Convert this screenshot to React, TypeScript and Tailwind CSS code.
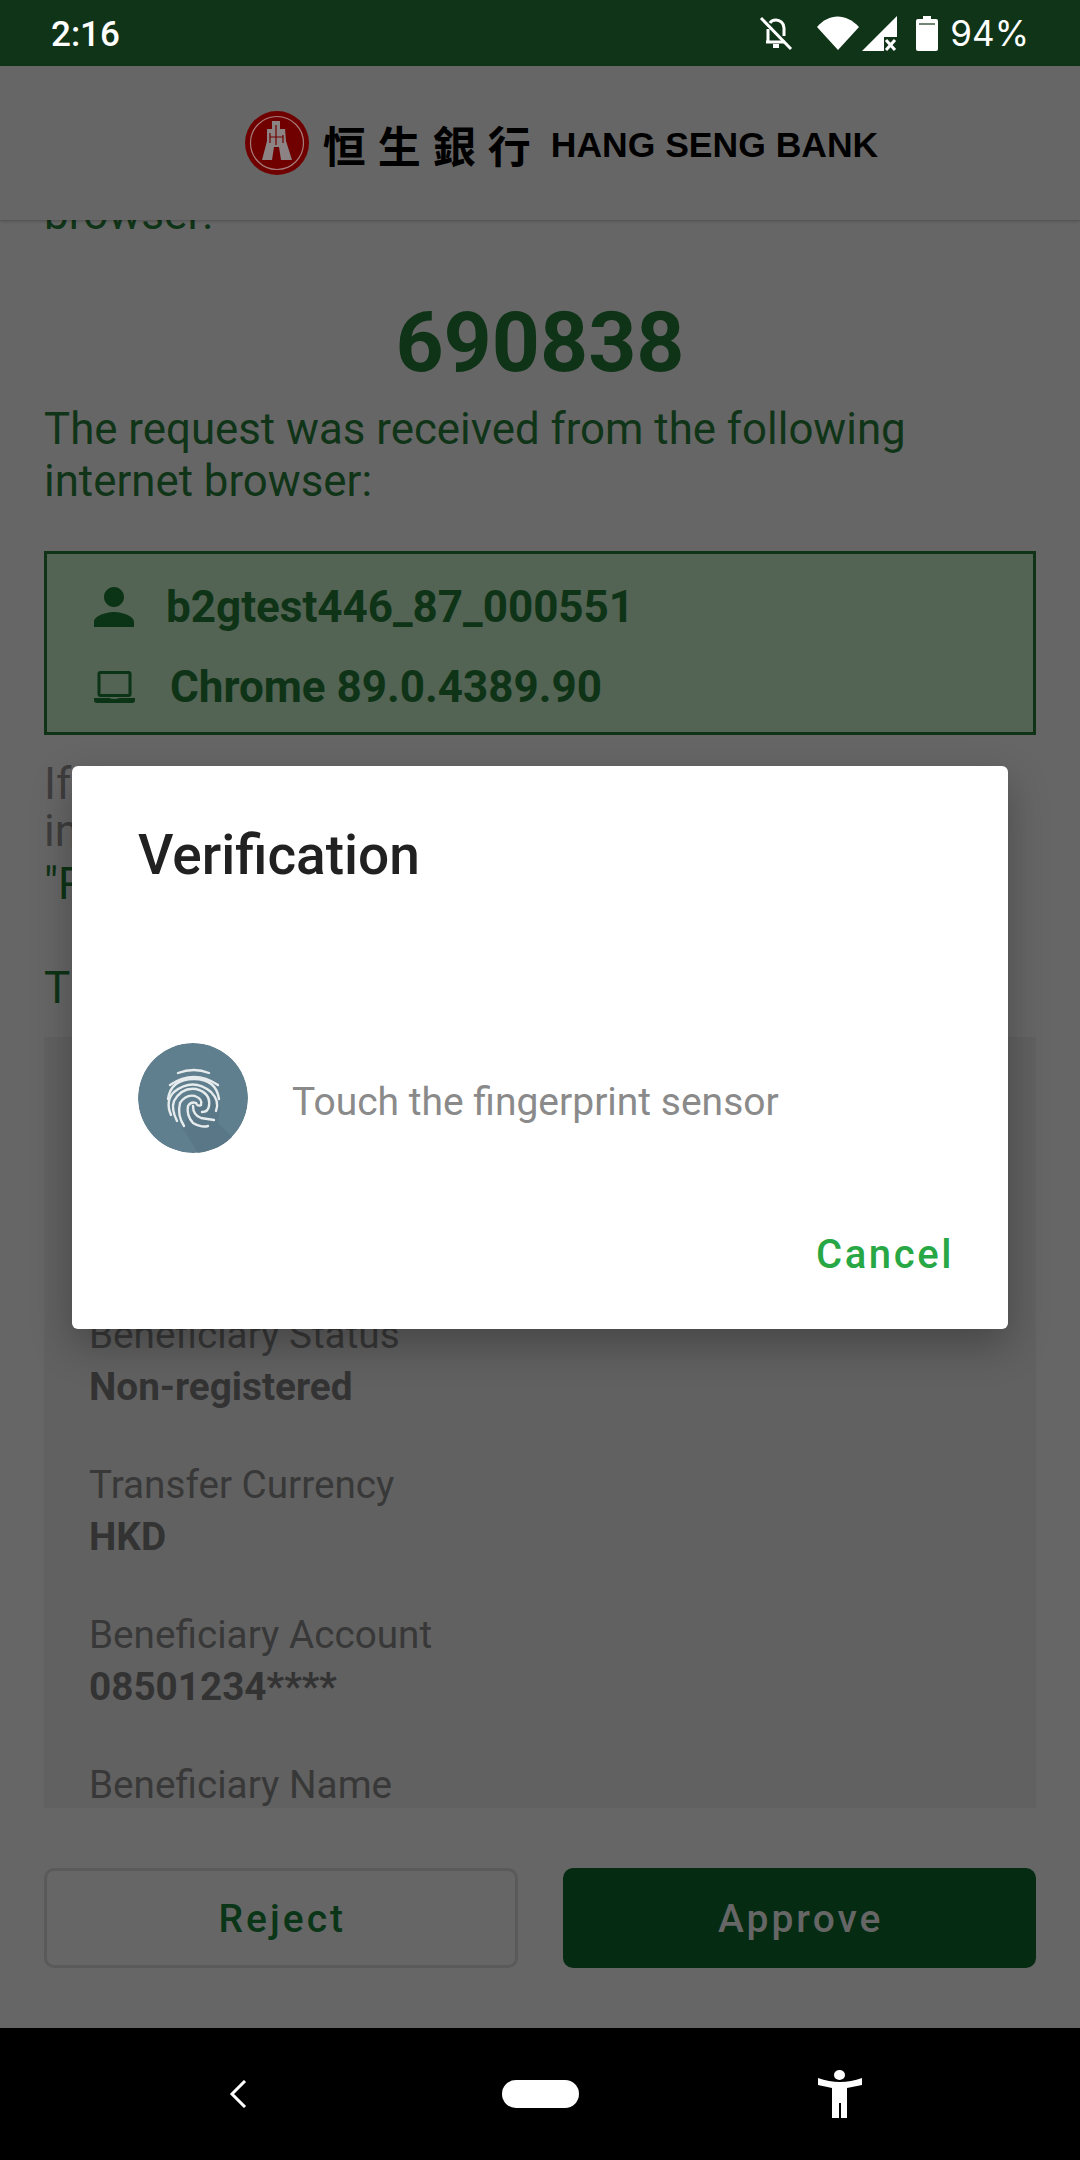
const roboto = "font-['Roboto',sans-serif]"

const details = [
  { label: 'Beneficiary Status', value: 'Non-registered' },
  { label: 'Transfer Currency', value: 'HKD' },
  { label: 'Beneficiary Account', value: '08501234****' },
  { label: 'Beneficiary Name', value: '' },
]

function StatusBar() {
  return (
    <div className="flex h-[66px] shrink-0 items-center bg-[#103417] pl-[51px] pr-[51px] text-white">
      <span className="pt-[2px] text-[35px] font-medium leading-none">2:16</span>
      <div className="ml-auto flex items-center">
        {/* bell off */}
        <svg width="36" height="36" viewBox="0 0 36 36" fill="none" stroke="#fff" strokeWidth="3" className="mr-[23px]">
          <path d="M3 3 L33 34" />
          <path d="M8 27 H27 M10 14 V26 M26 21 V13 C26 8 22 5 18 5 C15 5 13 6 12 8" />
          <path d="M15 31 H21" strokeWidth="4" />
        </svg>
        {/* wifi */}
        <svg width="42" height="34" viewBox="0 0 42 34" className="mr-[3px]">
          <path d="M0 11 C12 -3 29 -3 42 11 L21 34 Z" fill="#fff" />
        </svg>
        {/* signal, no sim */}
        <svg width="35" height="35" viewBox="0 0 35 35" className="mr-[19px]">
          <path d="M0 35 L35 0 V21 H22 V35 Z" fill="#fff" />
          <path d="M24 24 L33 34 M33 24 L24 34" stroke="#fff" strokeWidth="3" />
        </svg>
        {/* battery */}
        <svg width="22" height="35" viewBox="0 0 22 35" className="mr-[12px]">
          <path d="M7 0 H15 V3 H20 Q22 3 22 5 V33 Q22 35 20 35 H2 Q0 35 0 33 V5 Q0 3 2 3 H7 Z" fill="#fff" />
          <rect x="3" y="7" width="16" height="2" fill="#103417" opacity="0.6" />
        </svg>
        <span className="font-['Inter',sans-serif] text-[35px] leading-none">94%</span>
      </div>
    </div>
  )
}

function BankLogo() {
  return (
    <svg width="64" height="64" viewBox="0 0 64 64" className="shrink-0">
      <circle cx="32" cy="32" r="32" fill="#700000" />
      <circle cx="32" cy="32" r="26.5" fill="none" stroke="#a87c7c" strokeWidth="1.2" />
      <path d="M27 10 H35 V18 H40 L41 30 L47 49 H36 L34 36 H29 L27 49 H17 L22 30 L22 18 H27 Z" fill="#8c8484" />
      <path d="M31 14 V34 M25 26 H38 M25 22 V32 M38 24 V32" stroke="#700000" strokeWidth="1.2" fill="none" />
    </svg>
  )
}

function Header() {
  return (
    <div className="relative z-10 flex h-[154px] shrink-0 items-center justify-center bg-[#666666] pl-[43px] shadow-[0_1px_3px_rgba(0,0,0,0.25)]">
      <BankLogo />
      <span className="ml-[14px] pt-[3px] font-['Noto_Sans_CJK_TC',sans-serif] text-[43px] font-bold leading-none tracking-[12px] text-[#000000]">
        恒生銀行
      </span>
      <span className="ml-[8px] pt-[5px] font-['Liberation_Sans',sans-serif] text-[35.5px] font-bold leading-none text-[#000000]">
        HANG SENG BANK
      </span>
    </div>
  )
}

function UserIcon() {
  return (
    <svg width="60" height="60" viewBox="0 0 24 24" fill="#0b3316" className="-mx-[10px] shrink-0">
      <path d="M12 12c2.21 0 4-1.79 4-4s-1.79-4-4-4-4 1.79-4 4 1.79 4 4 4zm0 2c-2.67 0-8 1.34-8 4v2h16v-2c0-2.66-5.33-4-8-4z" />
    </svg>
  )
}

function LaptopIcon() {
  return (
    <svg width="41" height="32" viewBox="0 0 41 32" className="shrink-0">
      <rect x="5" y="1.5" width="31" height="23" rx="1.5" fill="none" stroke="#0b3316" strokeWidth="3" />
      <path d="M0 27 H15 Q20 29 26 27 H41 V29 Q41 32 38 32 H3 Q0 32 0 29 Z" fill="#0b3316" />
    </svg>
  )
}

function Fingerprint() {
  return (
    <svg width="110" height="110" viewBox="0 0 110 110" className="rounded-full">
      <circle cx="55" cy="55" r="55" fill="#5f7f8e" />
      <path d="M68 48 L82 62 L80 80 L110 110 L60 110 L44 84 Z" fill="#597786" />
      <g fill="none" stroke="#e6ebed" strokeWidth="2.4" strokeLinecap="round">
        <path d="M40 30 Q56 24 71 30" />
        <path d="M32 42 Q56 26 80 42" />
        <path d="M30 56 Q33 36 56 36 Q78 36 81 56" />
        <path d="M33 72 Q27 58 36 49 Q55 34 73 49 Q82 58 78 68" />
        <path d="M39 78 Q33 66 36 58 Q44 44 58 46 Q73 50 71 63 Q70 69 64 69" />
        <path d="M46 83 Q39 72 42 60 Q48 51 57 53 Q65 56 63 62 Q60 64 58 60 Q53 58 50 63 Q48 72 55 80 Q64 85 70 83" />
        <path d="M55 63 Q55 72 63 75 L76 77" />
      </g>
    </svg>
  )
}

function VerificationDialog() {
  return (
    <div className="absolute left-[72px] top-[766px] flex h-[563px] w-[936px] flex-col rounded-[6px] bg-white pl-[66px] pr-[54px] shadow-[0_16px_40px_rgba(0,0,0,0.28)]">
      <h2 className="mt-[59px] text-[55px] font-medium leading-[60px] text-[#212121]">Verification</h2>
      <div className="mt-[158px] flex items-center">
        <Fingerprint />
        <span className="ml-[44px] pt-[8px] text-[39px] leading-none text-[#8a8a8a]">Touch the fingerprint sensor</span>
      </div>
      <span className="ml-auto mt-[82px] text-[40px] font-medium leading-none tracking-[2.6px] text-[#28a745]">Cancel</span>
    </div>
  )
}

export default function App() {
  return (
    <div className={`relative flex h-[2160px] w-[1080px] flex-col overflow-hidden bg-[#666666] ${roboto}`}>
      <StatusBar />
      <Header />

      <main className="flex min-h-0 flex-1 flex-col overflow-hidden px-[44px]">
        <p className="-mt-[32px] text-[44px] leading-[52px] text-[#103417]">browser:</p>
        <p className="mt-[61px] text-center text-[84px] font-bold leading-[84px] text-[#0e3316]">690838</p>
        <p className="mt-[18px] text-[43.8px] leading-[52px] text-[#103417]">
          The request was received from the following
          <br />
          internet browser:
        </p>

        <div className="mt-[44px] flex h-[184px] flex-col border-[3px] border-[#0e3316] bg-[#536354] pl-[47px] pt-[25px] text-[44px] font-bold text-[#0e3316]">
          <div className="flex h-[56px] items-center">
            <UserIcon />
            <span className="ml-[32px] leading-none">b2gtest446_87_000551</span>
          </div>
          <div className="mt-[24px] flex h-[56px] items-center">
            <LaptopIcon />
            <span className="ml-[35px] leading-none">Chrome 89.0.4389.90</span>
          </div>
        </div>

        <div className="mt-[26px] text-[44px] leading-[47px] text-[#3d3d3d]">
          <p>If</p>
          <p>in</p>
          <p className="mt-[6px] text-[#0e3316]">"R</p>
        </div>
        <p className="mt-[54px] text-[44px] leading-[52px] text-[#0e3316]">T</p>

        <div className="mt-[23px] flex min-h-0 flex-1 flex-col bg-[#616161] px-[45px] pt-[272px]">
          {details.map(row => (
            <div key={row.label} className="mb-[46px] shrink-0 text-[38.7px] leading-[52px]">
              <p className="text-[#383838]">{row.label}</p>
              {row.value && <p className="font-bold text-[#333333]">{row.value}</p>}
            </div>
          ))}
        </div>
      </main>

      <div className="grid h-[220px] shrink-0 grid-cols-2 gap-[45px] px-[44px] pt-[60px] text-[39px] font-medium tracking-[3px]">
        <button className="h-[100px] rounded-[10px] border-[3px] border-[#5a5a5a] pl-[3px] pt-[3px] text-[#0a3517]">Reject</button>
        <button className="h-[100px] rounded-[10px] bg-[#052c12] pl-[3px] pt-[3px] text-[#666666]">Approve</button>
      </div>

      <div className="flex h-[132px] shrink-0 items-center bg-black">
        <div className="flex w-full items-center justify-between pl-[229px] pr-[218px]">
          <svg width="18" height="28" viewBox="0 0 18 28" fill="none" stroke="#fff" strokeWidth="3">
            <path d="M16 1 L3 14 L16 27" />
          </svg>
          <div className="ml-[16px] h-[28px] w-[77px] rounded-full bg-white" />
          <svg width="44" height="48" viewBox="0 0 44 48" fill="#fff">
            <ellipse cx="21.5" cy="5" rx="5.5" ry="5" />
            <path d="M0 8 Q22 16 44 8 V15 L29 18 V48 H23 V33 H21 V48 H14 V18 L0 15 Z" />
          </svg>
        </div>
      </div>

      <VerificationDialog />
    </div>
  )
}
